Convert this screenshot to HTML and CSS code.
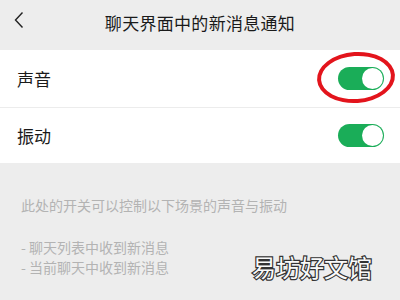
FILE: index.html
```html
<!DOCTYPE html>
<html lang="zh">
<head>
<meta charset="utf-8">
<link rel="stylesheet" href="styles.css">
</head>
<body>
<div class="page">
  <header class="nav">
    <svg class="back" width="10" height="18" viewBox="0 0 10 18"><path d="M8.5 1.5 L1.5 9 L8.5 16.5" fill="none" stroke="#222" stroke-width="1.4"/></svg>
    <div class="title">聊天界面中的新消息通知</div>
  </header>
  <section class="group">
    <div class="row">
      <span class="label">声音</span>
      <span class="switch"><span class="knob"></span></span>
      <span class="circle"></span>
    </div>
    <div class="row">
      <span class="label">振动</span>
      <span class="switch"><span class="knob"></span></span>
    </div>
  </section>
  <div class="desc">此处的开关可以控制以下场景的声音与振动</div>
  <ul class="list">
    <li>- 聊天列表中收到新消息</li>
    <li>- 当前聊天中收到新消息</li>
  </ul>
  <div class="mark">易坊好文馆</div>
</div>
</body>
</html>
```
FILE: styles.css
```css
* { box-sizing: border-box; }
html, body { margin: 0; padding: 0; }
body {
  width: 400px; height: 300px; overflow: hidden;
  background: #ededed;
  font-family: "Noto Sans CJK SC", "Noto Sans", sans-serif;
}
.page { position: relative; width: 400px; height: 300px; }
.nav {
  position: relative;
  height: 50px;
  display: flex; align-items: center; justify-content: center;
}
.back { position: absolute; left: 14px; top: 11px; }
.title { font-size: 17px; color: #1a1a1a; letter-spacing: 0.3px; margin-top: -6px; }
.group { background: #fff; }
.row {
  position: relative;
  height: 56.5px;
  display: flex; align-items: center; justify-content: space-between;
  padding: 0 16px 0 17px;
}
.row + .row { border-top: 1px solid #ececec; }
.label { font-size: 17px; color: #1a1a1a; }
.switch {
  position: relative;
  width: 46px; height: 23px;
  border-radius: 12px;
  background: #1aad58;
}
.knob {
  position: absolute; right: 1px; top: 1px;
  width: 21px; height: 21px; border-radius: 50%;
  background: #fff;
}
.circle {
  position: absolute; left: 317px; top: 2px;
  width: 78px; height: 51px;
  border: 4px solid #e3141c;
  border-radius: 50%;
  transform: rotate(-4deg);
}
.desc {
  margin: 32px 0 0 21px;
  font-size: 14px; line-height: 20px; color: #b3b3b3;
}
.list {
  list-style: none; margin: 22px 0 0 21px; padding: 0;
  font-size: 14px; color: #b3b3b3; line-height: 20px;
}
.mark {
  position: absolute; left: 252px; top: 249px;
  font-size: 24px; color: #fafafa;
  -webkit-text-stroke: 2.4px #333;
  paint-order: stroke fill;
}
```
